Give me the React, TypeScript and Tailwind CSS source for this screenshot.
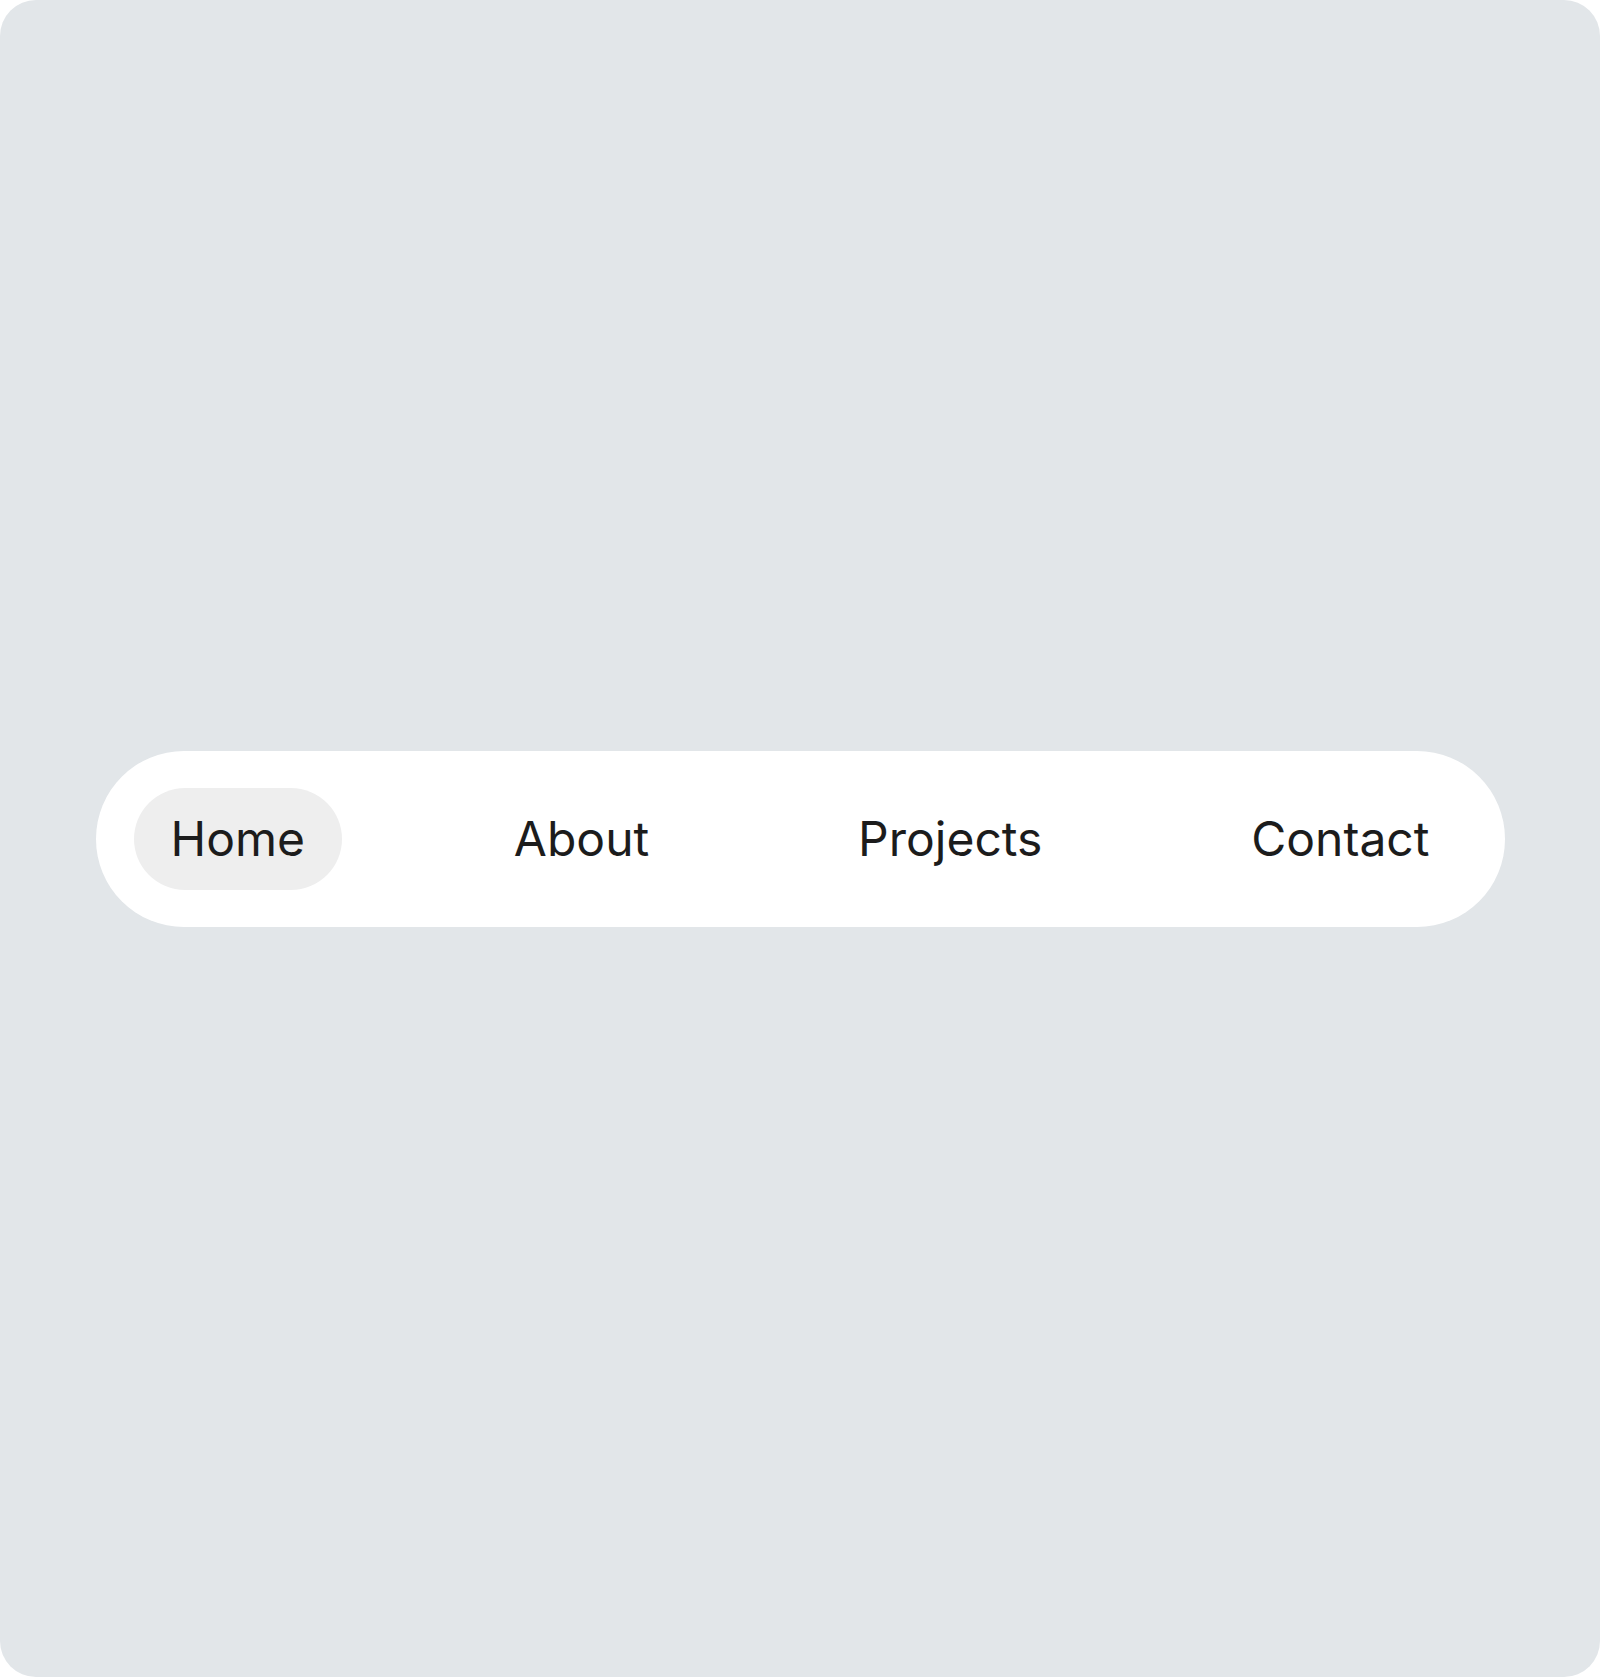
const links = [
  { label: 'Home', active: true },
  { label: 'About', active: false },
  { label: 'Projects', active: false },
  { label: 'Contact', active: false },
];

export default function App() {
  return (
    <div className="w-[1600px] h-[1677px] bg-white">
      <div className="w-full h-full rounded-[36px] bg-[#e2e6e9] flex items-center justify-center">
        <nav className="w-[1409px] h-[176px] rounded-full bg-white px-[38px] flex items-center justify-between">
          {links.map((link) => (
            <a
              key={link.label}
              href="#"
              className={`h-[102px] px-[37px] rounded-full flex items-center text-[48px] leading-none text-[#1c1c1c] font-['Inter',_'Liberation_Sans',_sans-serif] ${
                link.active ? 'bg-[#eeeeee]' : ''
              }`}
            >
              {link.label}
            </a>
          ))}
        </nav>
      </div>
    </div>
  );
}
